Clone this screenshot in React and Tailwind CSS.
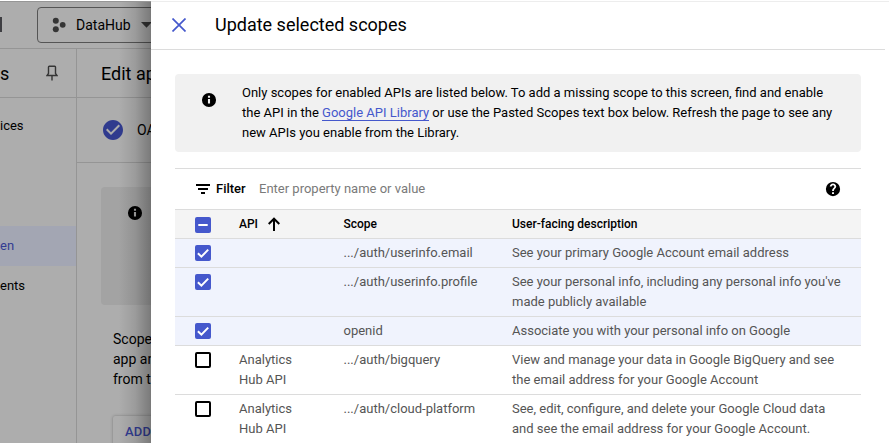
const ROWS = [
  { checked: true, api: '', scope: '.../auth/userinfo.email', lines: ['See your primary Google Account email address'] },
  { checked: true, api: '', scope: '.../auth/userinfo.profile', lines: ["See your personal info, including any personal info you've", 'made publicly available'] },
  { checked: true, api: '', scope: 'openid', lines: ['Associate you with your personal info on Google'] },
  { checked: false, api: 'Analytics Hub API', scope: '.../auth/bigquery', lines: ['View and manage your data in Google BigQuery and see', 'the email address for your Google Account'] },
  { checked: false, api: 'Analytics Hub API', scope: '.../auth/cloud-platform', lines: ['See, edit, configure, and delete your Google Cloud data', 'and see the email address for your Google Account.'] },
];

function Icon({ d, size = 24, className = '' }) {
  return (
    <svg width={size} height={size} viewBox="0 0 24 24" fill="currentColor" className={`block shrink-0 ${className}`}>
      <path d={d} />
    </svg>
  );
}

const INFO =
  'M12 2.600a9.400 9.400 0 1 0 0 18.800 9.400 9.400 0 0 0 0-18.800zm1.400 14.200h-2.800v-6.300h2.800zm0-7.800h-2.800V6.400h2.800z';
const HELP =
  'M12 2.500a9.500 9.500 0 1 0 0 19 9.500 9.500 0 0 0 0-19zM13.300 18.700h-2.600v-2.400h2.600zM14.900 11.400l-.9.900c-.6.600-.8 1.200-.8 2.400h-2.400v-.5c0-1.100.45-2.100 1.170-2.830l1.240-1.260c.37-.36.59-.86.59-1.300 0-1-.8-1.800-1.800-1.800s-1.800.8-1.800 1.800H7.700c0-2.300 1.900-4.200 4.300-4.200s4.300 1.900 4.300 4.200c0 1-.5 1.900-1.400 2.600z';
const CHECK_CIRCLE =
  'M12 2C6.480 2 2 6.480 2 12s4.480 10 10 10 10-4.480 10-10S17.520 2 12 2zm-2 15l-5-5 1.410-1.410L10 14.170l7.590-7.590L19 8l-9 9z';

function Checkbox({ state }) {
  if (state === 'off') return <div className="h-4 w-4 rounded-[2px] border-2 border-black bg-white" />;
  return (
    <div className="h-4 w-4 rounded-[2px] bg-[#4558cc]">
      <svg width="16" height="16" viewBox="0 0 16 16" fill="none" stroke="#fff" strokeWidth="2">
        {state === 'on' ? <path d="M2.900 8.300 6.400 11.700 13.200 4.600" /> : <path d="M3.300 8h9.400" />}
      </svg>
    </div>
  );
}

function Background() {
  return (
    <div className="relative h-full w-[151px] shrink-0 overflow-hidden bg-[#adadad]">
      <div className="flex h-full w-[400px] flex-col">
        <div className="flex h-[49px] shrink-0 border-b border-[#959595] pt-[7px]">
          <div className="mt-[10px] h-[15px] w-[2px] bg-[#3e3e42]" />
          <div className="ml-[35px] flex h-9 w-[150px] items-center rounded border border-[#555] pl-[14px]">
            <svg width="14" height="16" viewBox="0 0 14 16" fill="#353535" className="shrink-0">
              <circle cx="3.800" cy="3.700" r="3" />
              <circle cx="3.800" cy="12.300" r="3" />
              <circle cx="10.700" cy="7.800" r="2.900" />
            </svg>
            <span className="ml-[10px] w-[65px] text-[14px] leading-5">DataHub</span>
            <svg width="11" height="6" viewBox="0 0 11 6" fill="#353535" className="shrink-0">
              <path d="M0 0h11L5.500 5.700z" />
            </svg>
          </div>
        </div>
        <div className="flex min-h-0 flex-1">
          <div className="flex w-[77px] shrink-0 flex-col border-r border-[#959595]">
            <div className="flex h-[49px] shrink-0 items-center justify-between border-b border-[#959595] pr-[18px]">
              <span className="text-[18px]">s</span>
              <svg width="12" height="16" viewBox="0 0 12 16" fill="none" stroke="#353535" strokeWidth="1.400" className="shrink-0">
                <path d="M2.500 8.500V2q0-.8.800-.8h5.400q.8 0 .8.800v6.500L11 10.500H1zM6 10.500V15.500" />
              </svg>
            </div>
            <div className="mt-2 flex h-10 items-center text-[13px]">ices</div>
            <div className="mt-20 flex h-10 items-center bg-[#a3a6b3] text-[13px] text-[#323c92]">en</div>
            <div className="flex h-10 items-center text-[13px]">ents</div>
          </div>
          <div className="flex flex-1 flex-col">
            <div className="flex h-[49px] shrink-0 items-center border-b border-[#959595] pl-6 text-[18px]">Edit app</div>
            <div className="flex h-[65px] shrink-0 items-center border-b border-[#959595] pl-6">
              <Icon d={CHECK_CIRCLE} className="text-[#303b8e]" />
              <span className="ml-3 text-[14px]">OA</span>
            </div>
            <div className="ml-6 mt-6 h-[118px] shrink-0 rounded bg-[#a3a3a3] pl-[25px] pt-[17px]">
              <Icon d={INFO} size={18} className="text-black" />
            </div>
            <div className="ml-9 mt-6 text-[14px] leading-5">
              <div>Scope</div>
              <div>app an</div>
              <div>from t</div>
            </div>
            <div className="ml-9 mt-[27px] h-9 shrink-0 rounded-[2px] pl-3 pt-[6px] text-[13px] font-medium leading-5 tracking-[0.2px] text-[#323c92] shadow-[0_0_3px_rgba(0,0,0,0.3)]">
              ADD
            </div>
          </div>
        </div>
      </div>
      <div className="absolute inset-y-0 right-0 w-8 bg-gradient-to-r from-transparent via-black/10 to-black/30" />
    </div>
  );
}

export default function App() {
  return (
    <div className="h-[443px] w-[889px] overflow-hidden bg-white font-['Roboto',sans-serif] text-black">
      <div className="relative flex h-full">
        <Background />
        <div className="flex min-w-0 flex-1 flex-col">
          <div className="mr-1 flex h-[50px] shrink-0 items-center border-b border-[#dcdcdc] pl-[21px]">
            <svg width="14" height="14" viewBox="0 0 14 14" stroke="#4558cc" strokeWidth="1.700" className="shrink-0">
              <path d="M.5.5l13 13M13.500.5l-13 13" />
            </svg>
            <h1 className="ml-[29px] text-[18px] leading-6">Update selected scopes</h1>
          </div>
          <div className="mr-7 ml-6 mt-6 flex h-[78px] shrink-0 rounded bg-[#f1f1f1] pl-[25px] pt-[9px] text-[13px] leading-5">
            <Icon d={INFO} size={18} className="mt-2" />
            <div className="ml-6 whitespace-nowrap">
              <div>Only scopes for enabled APIs are listed below. To add a missing scope to this screen, find and enable</div>
              <div>
                the API in the <a className="border-b border-[#4558cc] text-[#4558cc]">Google API Library</a> or use the Pasted Scopes text box below. Refresh the page to see any
              </div>
              <div>new APIs you enable from the Library.</div>
            </div>
          </div>
          <div className="mr-7 ml-6 mt-4 flex h-[41px] shrink-0 items-center border-t border-[#dcdcdc] pl-[21px] pr-[19px] text-[13px]">
            <svg width="14" height="10" viewBox="0 0 14 10" className="shrink-0">
              <path d="M0 0h14v2H0zM2 4h10v2H2zM5 8h4v2H5z" />
            </svg>
            <span className="ml-[6px] w-[43px] font-medium">Filter</span>
            <span className="flex-1 text-[#7a7a7a]">Enter property name or value</span>
            <Icon d={HELP} size={18} />
          </div>
          <div className="mr-7 ml-6 grid h-[30px] shrink-0 grid-cols-[64px_104.5px_168.5px_1fr] border-y border-[#dcdcdc] bg-[#f4f4f4] pt-1 text-[12px] font-medium leading-5">
            <div className="pl-5 pt-[3px]">
              <Checkbox state="mixed" />
            </div>
            <div className="flex">
              API
              <svg width="12" height="14" viewBox="0 0 12 14" fill="none" stroke="#000" strokeWidth="2" className="ml-[10px] mt-[3px]">
                <path d="M6 14V2M.7 7 6 1.700 11.300 7" />
              </svg>
            </div>
            <div>Scope</div>
            <div>User-facing description</div>
          </div>
          {ROWS.map((row) => (
            <div
              key={row.scope}
              className={`mr-7 ml-6 grid shrink-0 grid-cols-[64px_104.5px_168.5px_1fr] border-b border-[#dcdcdc] py-1 text-[13px] leading-5 text-[#555] ${row.checked ? 'bg-[#f0f3fd]' : ''}`}
            >
              <div className="pl-5 pt-[2px]">
                <Checkbox state={row.checked ? 'on' : 'off'} />
              </div>
              <div className="pr-8">{row.api}</div>
              <div>{row.scope}</div>
              <div className="whitespace-nowrap">
                {row.lines.map((line) => (
                  <div key={line}>{line}</div>
                ))}
              </div>
            </div>
          ))}
        </div>
        <div className="absolute left-[151px] right-0 top-0 h-[2px] border-b border-[#ededed] bg-white" />
        <div className="absolute left-0 top-0 h-[2px] w-[151px] border-b border-[#969696] bg-white" />
      </div>
    </div>
  );
}
